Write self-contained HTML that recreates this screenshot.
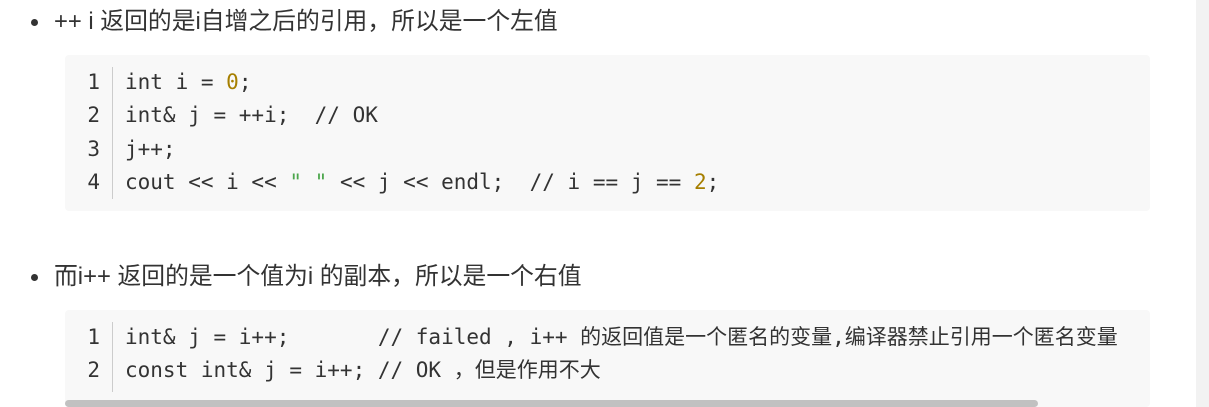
<!DOCTYPE html>
<html><head><meta charset="utf-8"><style>
body{margin:0;width:1209px;height:407px;overflow:hidden;background:#fff;position:relative;font-family:"Liberation Sans","Noto Sans CJK SC",sans-serif;}
.sb{position:absolute;left:1196px;top:0;width:13px;height:407px;background:#f2f2f2;}
.li{position:absolute;left:54px;font-size:23.8px;line-height:28px;color:#333;}
.dot{position:absolute;left:31px;width:7px;height:7px;border-radius:50%;background:#333;}
.code{position:absolute;left:65px;width:1085px;background:#f8f8f8;border-radius:4px;font-family:"DejaVu Sans Mono","Noto Sans CJK SC",monospace;font-size:21px;line-height:24px;color:#333;}
.ln{position:absolute;left:0;width:35px;text-align:right;color:#333;}
.bar{position:absolute;left:47px;width:1px;background:#ccc;}
.l{position:absolute;left:60px;white-space:pre;}
.n{color:#a67f00}.s{color:#4ca64c}
</style></head><body>
<div class="sb"></div>
<div class="dot" style="top:19px"></div>
<div class="li" style="top:8px">++ i 返回的是i自增之后的引用，所以是一个左值</div>
<div class="code" style="top:55px;height:156px">
<div class="bar" style="top:12px;height:132px"></div>
<div class="ln" style="top:15px">1</div><div class="l" style="top:15px">int i = <span class="n">0</span>;</div>
<div class="ln" style="top:48px">2</div><div class="l" style="top:48px">int&amp; j = ++i;  // OK</div>
<div class="ln" style="top:82px">3</div><div class="l" style="top:82px">j++;</div>
<div class="ln" style="top:115px">4</div><div class="l" style="top:115px">cout &lt;&lt; i &lt;&lt; <span class="s">" "</span> &lt;&lt; j &lt;&lt; endl;  // i == j == <span class="n">2</span>;</div>
</div>
<div class="dot" style="top:274px"></div>
<div class="li" style="top:263px">而i++ 返回的是一个值为i 的副本，所以是一个右值</div>
<div class="code" style="top:310px;height:97px">
<div class="bar" style="top:12px;height:70px"></div>
<div class="ln" style="top:15px">1</div><div class="l" style="top:15px">int&amp; j = i++;       // failed , i++ 的返回值是一个匿名的变量,编译器禁止引用一个匿名变量</div>
<div class="ln" style="top:48px">2</div><div class="l" style="top:48px">const int&amp; j = i++; // OK ，但是作用不大</div>
<div style="position:absolute;left:0;top:90px;width:973px;height:7px;background:#c1c1c1;border-radius:4px"></div>
</div>
</body></html>
